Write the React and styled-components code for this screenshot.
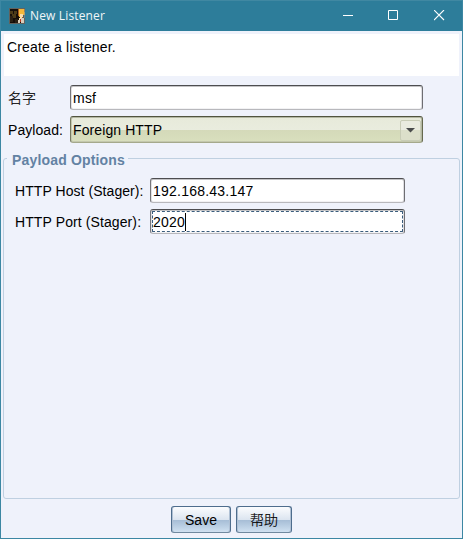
import React from 'react';
import styled, { createGlobalStyle } from 'styled-components';

const GlobalStyle = createGlobalStyle`
  *, *::before, *::after { box-sizing: border-box; }
  body { margin: 0; overflow: hidden; }
`;

const Window = styled.main`
  display: flex;
  flex-direction: column;
  width: 463px;
  height: 539px;
  border: 1px solid #3c87a3;
  border-top-color: #4088a2;
  background: #eff2fb;
  color: #000;
  font: 14px/16px 'Liberation Sans', 'Noto Sans CJK SC', sans-serif;
  white-space: nowrap;
`;

const TitleBar = styled.header`
  display: flex;
  align-items: center;
  flex: 0 0 30px;
  padding: 0 0 1px 8px;
  background: #2d7d9a;
  color: #f0f6f8;
`;

const Title = styled.h1`
  flex: 1;
  margin: 1px 0 0 5px;
  font: 400 12px/16px 'Open Sans', 'Noto Sans', sans-serif;
  letter-spacing: 0.15px;
`;

const WindowButton = styled.button`
  display: grid;
  place-items: center;
  width: ${({ $width }) => $width || 45}px;
  height: 28px;
  padding: 0;
  border: 0;
  background: none;
  color: #fff;
`;

const Description = styled.p`
  flex: 0 0 42px;
  margin: 3px;
  padding: 5px 3px;
  background: #fff;
  letter-spacing: 0.17px;
`;

const Form = styled.div`
  display: grid;
  grid-template-columns: 62px 353px;
  grid-template-rows: 25px 27px;
  row-gap: 6px;
  margin: 6px 0 0 7px;
  align-items: center;
`;

const Label = styled.label`
  letter-spacing: ${({ $spacing }) => $spacing || 0}px;
`;

const LightText = styled.span`
  font-weight: 300;
  -webkit-text-stroke: 0.2px #000;
`;

const Field = styled.div`
  display: flex;
  align-items: center;
  height: 25px;
  padding: 0 2px;
  border: 1px solid #777;
  border-color: #4d4d50 #6e6e72 #b8b8bc #77777b;
  border-radius: 3px;
  background: #fff;
  box-shadow: inset 0 1px #c4c4c6, inset 1px 0 #e2e2e5, inset -1px 0 #dedee2, inset 0 -1px #f2f2f4;
  outline: ${({ $focused }) => ($focused ? '1px dashed #3b5d7c' : 'none')};
  outline-offset: -3px;
  letter-spacing: 0.22px;
`;

const Caret = styled.span`
  width: 1px;
  height: 18px;
  background: #000;
`;

const Select = styled.div`
  display: flex;
  align-items: center;
  justify-content: space-between;
  height: 27px;
  padding: 0 1px 0 2px;
  border: 1px solid #777b62;
  border-color: #51543f #65694e #a5a98c #777b62;
  border-radius: 3px;
  background: linear-gradient(#e7eada 0, #e9ecde 13px, #d4d9b9 13px, #d9dfbe 100%);
  box-shadow: inset 0 1px #b4b8a3, inset -1px 0 #b4b8a3, inset 1px 0 #c4c8b0, inset 0 -1px #c4c8ae;
  letter-spacing: 0.1px;
`;

const Arrow = styled.span`
  display: grid;
  place-items: center;
  width: 21px;
  height: 21px;
  margin-top: 1px;
  border: 1px solid #c8ccb6;
  border-radius: 2px;
  background: linear-gradient(#e9ebdf 50%, #dcdfca 50%);
`;

const Options = styled.fieldset`
  flex: 0 0 348px;
  min-width: 0;
  margin: 8px 2px 0;
  padding: 12px 0 0 11px;
  border: 1px solid #bfd0e1;
  border-radius: 3px;
`;

const Legend = styled.legend`
  height: 15px;
  margin-left: -8px;
  padding: 0 3px 0 5px;
  color: #6382a3;
  font-weight: 700;
  line-height: 18px;
  letter-spacing: 0.17px;
`;

const OptionGrid = styled.div`
  display: grid;
  grid-template-columns: 135px 255px;
  grid-auto-rows: 25px;
  row-gap: 6px;
  align-items: center;
`;

const Actions = styled.footer`
  display: flex;
  justify-content: center;
  gap: 5px;
  margin-top: 7px;
`;

const Button = styled.button`
  width: ${({ $width }) => $width}px;
  height: 27px;
  padding: 0;
  border: 1px solid #4e6d8d;
  border-bottom-color: #70899f;
  border-radius: 3px;
  background: linear-gradient(#fbfcfe 0, #dce5f0 50%, #a5bcd5 51%, #bdd1e5 80%, #d0e1f1 100%);
  box-shadow: inset 1px 0 #afc0d4, inset -1px 0 #afc0d4;
  color: #000;
  font: inherit;
`;

const AppIcon = () => (
  <svg width="16" height="16" viewBox="0 0 16 16" shapeRendering="crispEdges">
    <path fill="#160e09" d="M0 0h16v16H0z" />
    <path fill="#4d3b18" d="M1 3h3v3H1zM5 3h3v3H5zM3 6h4v4H3z" />
    <path fill="#2b2014" d="M1 8h3v6H1zM6 11h3v4H6z" />
    <path fill="#a85a1c" d="M9 1h7v7h-2v3h-3V8H9z" />
    <path fill="#f3b83b" d="M10 1h5v3h1v3h-3v2h-3z" />
    <path fill="#f9dfad" d="M11 6h3v3h-1v2h-2zM10 10h2v2h-2z" />
    <path fill="#d8cdbc" d="M12 10h3v5h-3zM9 12h2v3H9z" />
    <path fill="#bf3720" d="M11 11h1v3h-1z" />
    <path fill="#47606d" d="M14 7h2v3h-2z" />
    <path fill="none" stroke="#8c918b" strokeOpacity=".65" d="M.5.5h15v15H.5z" />
  </svg>
);

export default function App() {
  return (
    <>
      <GlobalStyle />
      <Window>
        <TitleBar>
          <AppIcon />
          <Title>New Listener</Title>
          <WindowButton aria-label="Minimize">
            <svg width="11" height="11"><path d="M0 5.5h10" stroke="currentColor" /></svg>
          </WindowButton>
          <WindowButton aria-label="Maximize">
            <svg width="11" height="11"><path d="M.5.5h9v9h-9z" fill="none" stroke="currentColor" /></svg>
          </WindowButton>
          <WindowButton aria-label="Close" $width={46}>
            <svg width="11" height="11"><path d="m0 0 10 10m0-10-10 10" fill="none" stroke="currentColor" strokeWidth="1.1" /></svg>
          </WindowButton>
        </TitleBar>
        <Description>Create a listener.</Description>
        <Form>
          <Label><LightText>名字</LightText></Label>
          <Field>msf</Field>
          <Label $spacing={0.06}>Payload:</Label>
          <Select>
            Foreign HTTP
            <Arrow>
              <svg width="9" height="5"><path d="M0 0h9L4.5 4.5z" fill="#4a4c4c" /></svg>
            </Arrow>
          </Select>
        </Form>
        <Options>
          <Legend>Payload Options</Legend>
          <OptionGrid>
            <Label $spacing={0.06}>HTTP Host (Stager):</Label>
            <Field>192.168.43.147</Field>
            <Label $spacing={0.1}>HTTP Port (Stager):</Label>
            <Field $focused>2020<Caret /></Field>
          </OptionGrid>
        </Options>
        <Actions>
          <Button $width={60}>Save</Button>
          <Button $width={56}><LightText>帮助</LightText></Button>
        </Actions>
      </Window>
    </>
  );
}
